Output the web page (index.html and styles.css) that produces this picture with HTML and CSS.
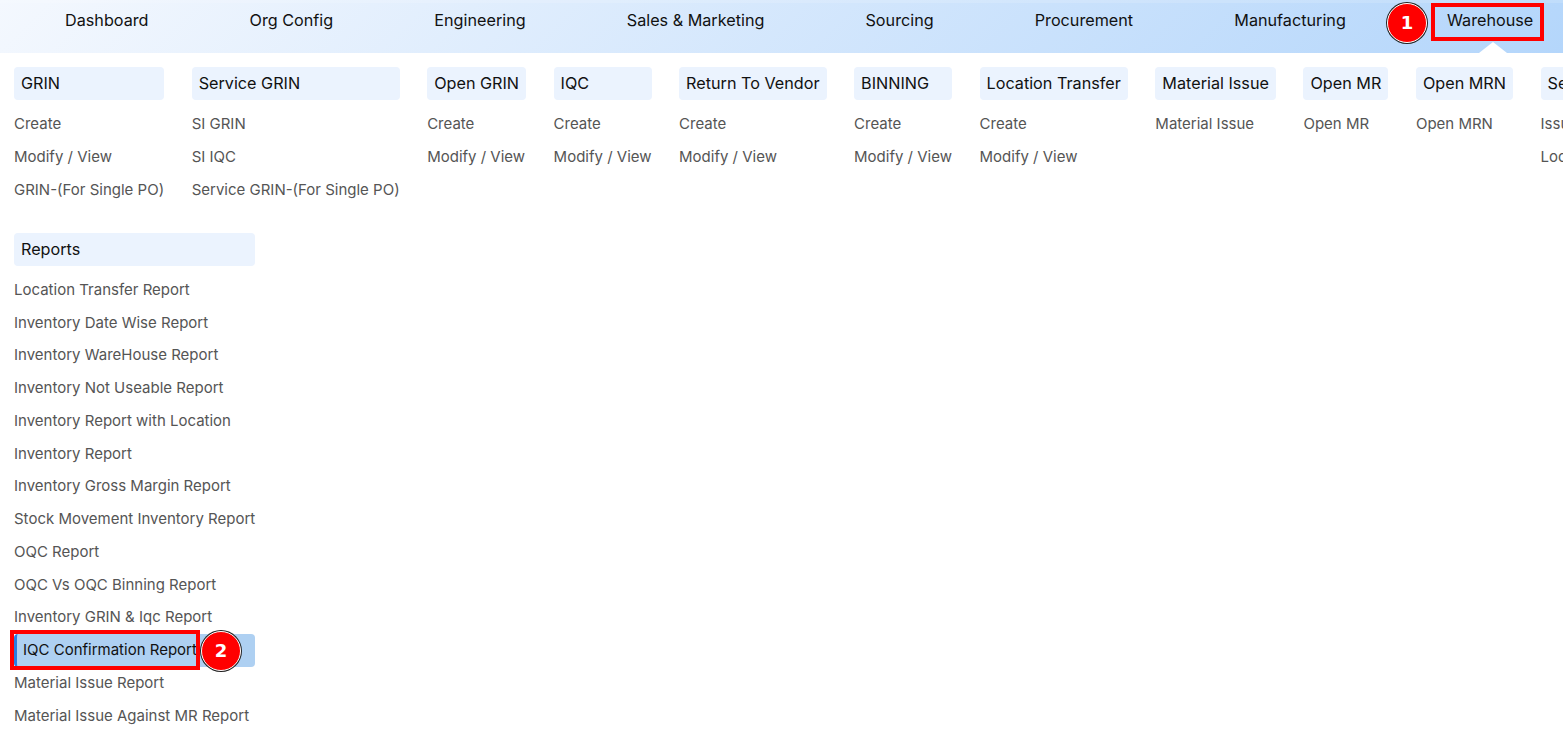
FILE: index.html
```html
<!DOCTYPE html>
<html lang="en">
<head>
    <meta charset="UTF-8">
    <title>Warehouse menu</title>
    <link rel="stylesheet" href="styles.css">
</head>
<body>
    <nav class="topnav">
        <a>Dashboard</a>
        <a>Org Config</a>
        <a>Engineering</a>
        <a>Sales &amp; Marketing</a>
        <a>Sourcing</a>
        <a>Procurement</a>
        <a>Manufacturing</a>
        <a class="current">Warehouse</a>
    </nav>
    <span class="mark mark-nav"></span>
    <span class="badge badge-nav">1</span>

    <div class="menu-row">
        <div class="menu-col">
            <h4>GRIN</h4>
            <a>Create</a>
            <a>Modify / View</a>
            <a>GRIN-(For Single PO)</a>
        </div>
        <div class="menu-col">
            <h4>Service GRIN</h4>
            <a>SI GRIN</a>
            <a>SI IQC</a>
            <a>Service GRIN-(For Single PO)</a>
        </div>
        <div class="menu-col">
            <h4>Open GRIN</h4>
            <a>Create</a>
            <a>Modify / View</a>
        </div>
        <div class="menu-col">
            <h4>IQC</h4>
            <a>Create</a>
            <a>Modify / View</a>
        </div>
        <div class="menu-col">
            <h4>Return To Vendor</h4>
            <a>Create</a>
            <a>Modify / View</a>
        </div>
        <div class="menu-col">
            <h4>BINNING</h4>
            <a>Create</a>
            <a>Modify / View</a>
        </div>
        <div class="menu-col">
            <h4>Location Transfer</h4>
            <a>Create</a>
            <a>Modify / View</a>
        </div>
        <div class="menu-col">
            <h4>Material Issue</h4>
            <a>Material Issue</a>
        </div>
        <div class="menu-col">
            <h4>Open MR</h4>
            <a>Open MR</a>
        </div>
        <div class="menu-col">
            <h4>Open MRN</h4>
            <a>Open MRN</a>
        </div>
        <div class="menu-col">
            <h4>Serial Number</h4>
            <a>Issue</a>
            <a>Location</a>
        </div>
    </div>

    <div class="menu-row reports-row">
        <div class="menu-col reports">
            <h4>Reports</h4>
            <a>Location Transfer Report</a>
            <a>Inventory Date Wise Report</a>
            <a>Inventory WareHouse Report</a>
            <a>Inventory Not Useable Report</a>
            <a>Inventory Report with Location</a>
            <a>Inventory Report</a>
            <a>Inventory Gross Margin Report</a>
            <a>Stock Movement Inventory Report</a>
            <a>OQC Report</a>
            <a>OQC Vs OQC Binning Report</a>
            <a>Inventory GRIN &amp; Iqc Report</a>
            <a class="active">IQC Confirmation Report</a>
            <a>Material Issue Report</a>
            <a>Material Issue Against MR Report</a>
        </div>
    </div>
    <span class="mark mark-item"></span>
    <span class="badge badge-item">2</span>
</body>
</html>
```

FILE: styles.css
```css
html, body {
    height: 100%;
    overflow: hidden;
}
body {
    margin: 0;
    position: relative;
    background: white;
    font-family: Inter, "Noto Sans", sans-serif;
    font-size: 15px;
    color: #555;
}
.topnav {
    display: flex;
    gap: 101.1px;
    height: 53px;
    padding-left: 65px;
    background: linear-gradient(135deg, #f4f8fe, #b4d6fb);
    box-shadow: inset 0 3px 0 rgba(255, 255, 255, 0.15);
    font-size: 16.2px;
    color: #111;
    white-space: nowrap;
}
.topnav a {
    position: relative;
    line-height: 41px;
}
.topnav .current::after {
    content: "";
    position: absolute;
    left: 50%;
    bottom: 0;
    margin-left: -11px;
    border-left: 14px solid transparent;
    border-right: 14px solid transparent;
    border-bottom: 11px solid white;
}
.menu-row {
    display: flex;
    gap: 27.55px;
    padding: 14px 0 0 14px;
    white-space: nowrap;
}
.reports-row {
    padding-top: 0;
    margin-top: 27px;
}
.menu-col {
    display: flex;
    flex-direction: column;
}
.menu-col h4 {
    margin: 0 0 7px;
    padding: 0 7px;
    height: 33px;
    line-height: 33px;
    background: #ebf3fe;
    border-radius: 4px;
    font-size: 16.2px;
    font-weight: 400;
    color: #111;
}
.menu-col a {
    line-height: 33px;
}
.reports h4 {
    margin-bottom: 7.9px;
}
.reports a {
    line-height: 32.75px;
}
.reports .active {
    background: #aed0f2;
    border-left: 3px solid #2a7de1;
    border-radius: 4px;
    padding-left: 6px;
    color: #111;
}
/* red annotations on top of the screenshot */
.mark {
    position: absolute;
    border: 4px solid #ff0000;
    box-sizing: border-box;
}
.mark-nav {
    left: 1431px;
    top: 3px;
    width: 113px;
    height: 38px;
}
.mark-item {
    left: 10px;
    top: 630px;
    width: 190px;
    height: 40px;
}
.badge {
    position: absolute;
    width: 38px;
    height: 38px;
    line-height: 38px;
    border-radius: 50%;
    background: #ff0000;
    border: 1px solid white;
    box-shadow: 0 0 0 1px #222;
    color: white;
    font-family: "DejaVu Sans", sans-serif;
    font-size: 18px;
    font-weight: 700;
    text-align: center;
}
.badge-nav {
    left: 1387px;
    top: 3px;
}
.badge-item {
    left: 201px;
    top: 631px;
}
```
